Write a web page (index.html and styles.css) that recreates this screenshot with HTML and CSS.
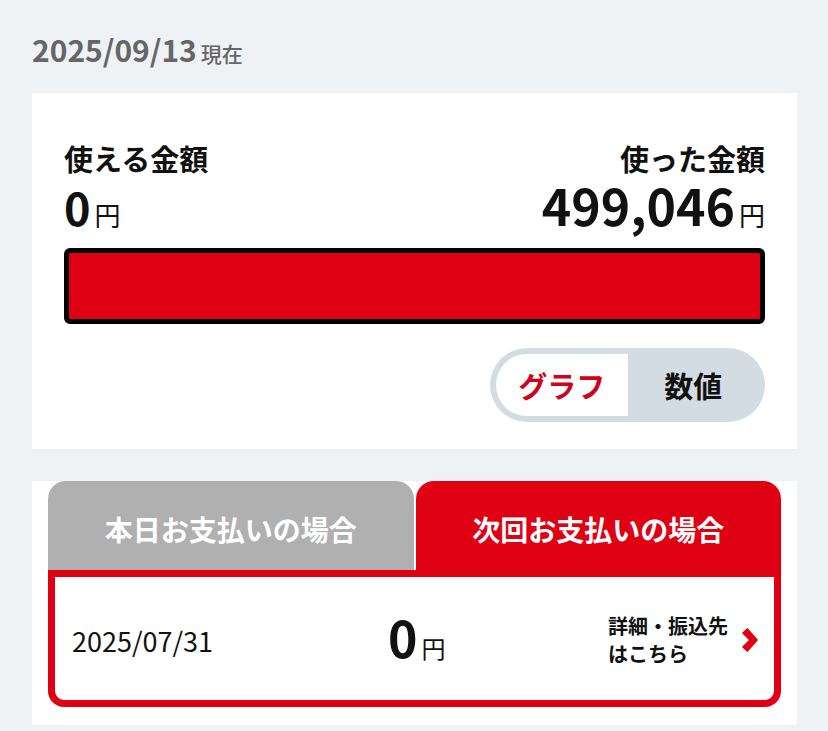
FILE: index.html
```html
<!DOCTYPE html>
<html lang="ja">
<head>
<meta charset="utf-8">
<title>利用状況</title>
<link rel="stylesheet" href="styles.css">
</head>
<body>
<div class="page">
  <div class="asof"><span class="asof-date">2025/09/13</span><span class="asof-label">現在</span></div>

  <section class="card usage">
    <div class="usage-head">
      <div class="col">
        <div class="label">使える金額</div>
        <div class="amount"><span class="num small">0</span><span class="yen">円</span></div>
      </div>
      <div class="col right">
        <div class="label">使った金額</div>
        <div class="amount"><span class="num">499,046</span><span class="yen">円</span></div>
      </div>
    </div>
    <div class="bar"><div class="bar-fill"></div></div>
    <div class="toggle-row">
      <div class="toggle">
        <div class="seg active">グラフ</div>
        <div class="seg">数値</div>
      </div>
    </div>
  </section>

  <section class="card pay">
    <div class="tabs">
      <div class="tab">本日お支払いの場合</div>
      <div class="tab current">次回お支払いの場合</div>
    </div>
    <div class="pay-box">
      <div class="pay-date">2025/07/31</div>
      <div class="pay-amount"><span class="num">0</span><span class="yen">円</span></div>
      <div class="pay-link">詳細・振込先<br>はこちら</div>
      <svg class="chev" width="16" height="24" viewBox="0 0 16 24"><polygon points="0.8,5 5.5,0.8 15.2,12 5.5,23.2 0.8,19 7.8,12" fill="#e00014" stroke="#e00014" stroke-width="1.2" stroke-linejoin="round"/></svg>
    </div>
  </section>
</div>
</body>
</html>
```
FILE: styles.css
```css
* { box-sizing: border-box; }
html, body { margin: 0; padding: 0; }
body {
  background: #eef2f5;
  font-family: "Noto Sans CJK JP", "Noto Sans", sans-serif;
  color: #111;
  width: 828px;
  height: 731px;
  overflow: hidden;
}
.page { padding: 0 32px 0 32px; width: 829px; }

.asof {
  padding-top: 29px;
  height: 69px;
  line-height: 40px;
  color: #666;
  font-weight: 700;
}
.asof-date { font-size: 30px; }
.asof-label { font-size: 21px; margin-left: 4px; font-weight: 500; }

.card { background: #fff; }
.usage { margin-top: 24px; padding: 47px 32px 27px 32px; }

.usage-head { display: flex; justify-content: space-between; }
.col.right { text-align: right; }
.label { font-size: 29px; font-weight: 700; line-height: 36px; }
.amount { font-size: 50px; line-height: 50px; font-weight: 700; margin-top: 3px; }
.amount .num.small { font-size: 45px; }
.yen { font-size: 26px; font-weight: 400; margin-left: 4px; }

.bar {
  margin-top: 8px;
  height: 76px;
  border: 5px solid #000;
  border-radius: 6px;
  background: #e00014;
}
.bar-fill { height: 100%; }

.toggle-row { display: flex; justify-content: flex-end; margin-top: 24px; }
.toggle {
  display: flex;
  width: 275px;
  height: 74px;
  padding: 6px;
  border-radius: 37px;
  background: #d4dce3;
}
.seg {
  flex: 1;
  display: flex;
  align-items: center;
  justify-content: center;
  font-size: 29px;
  font-weight: 700;
  color: #111;
}
.seg.active {
  background: #fff;
  color: #d0021b;
  border-radius: 31px 0 0 31px;
}

.pay { margin-top: 48px; padding: 0 16px 18px 16px; }
.tabs { display: flex; gap: 2px; margin-top: -16px; }
.tab {
  flex: 1;
  height: 89px;
  border-radius: 18px 18px 0 0;
  background: #b0b0b0;
  color: #fff;
  font-size: 28px;
  font-weight: 700;
  display: flex;
  align-items: center;
  justify-content: center;
  padding-top: 6px;
}
.tab.current { background: #e00014; }

.pay-box {
  border: 7px solid #e00014;
  border-radius: 0 0 16px 16px;
  height: 137px;
  padding: 0 16px 0 17px;
  display: grid;
  grid-template-columns: 316px 1fr auto auto;
  align-items: center;
}
.pay-date { font-size: 27px; font-weight: 400; margin-top: 4px; }
.pay-amount { font-size: 50px; font-weight: 700; line-height: 50px; margin-top: 6px; }
.pay-amount .yen { font-size: 24px; }
.pay-link { font-size: 20px; font-weight: 700; line-height: 28px; margin-right: 14px; margin-top: 2px; }
.chev { display: block; margin-top: 2px; }
```
